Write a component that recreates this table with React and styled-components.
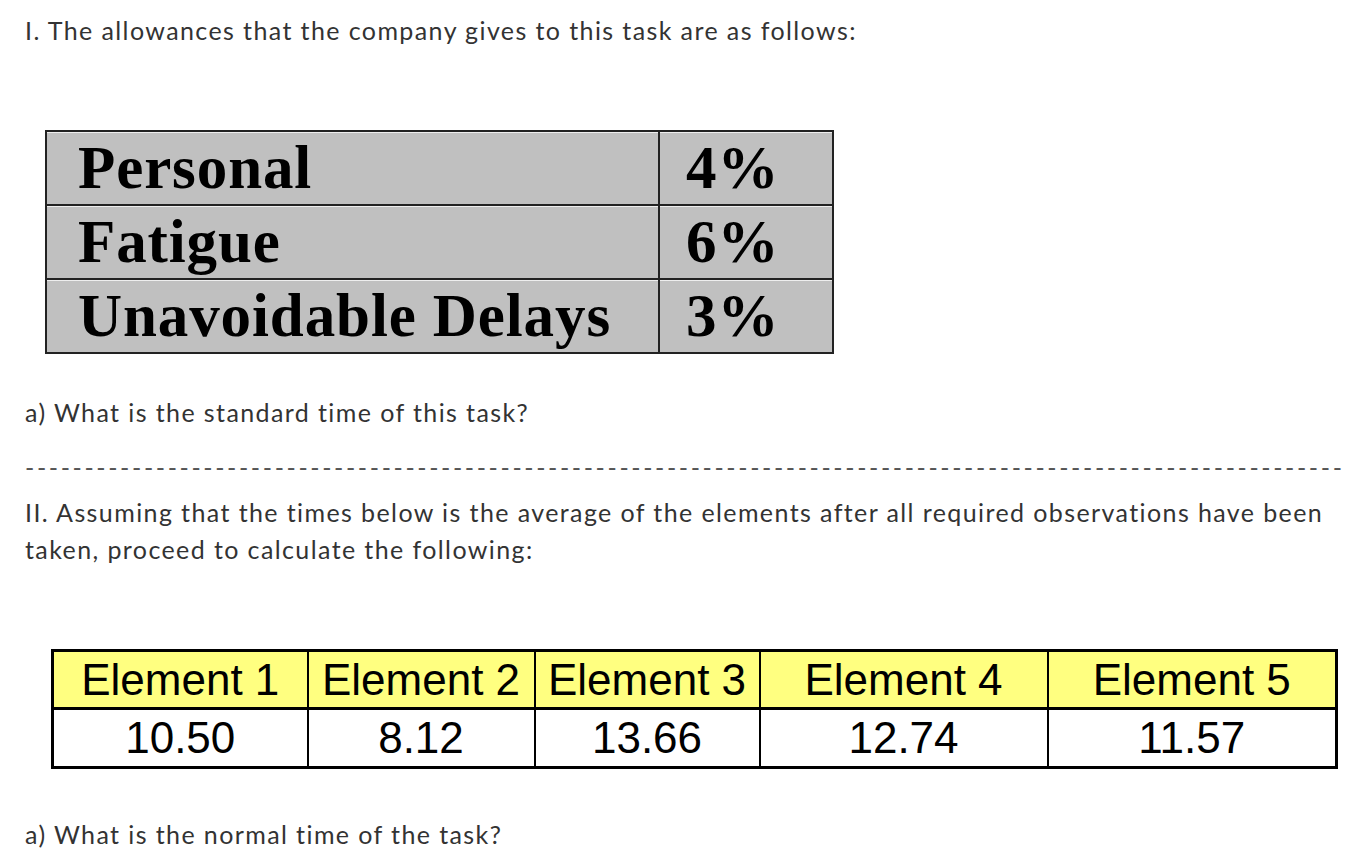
import React from "react";
import styled, { createGlobalStyle } from "styled-components";

const Global = createGlobalStyle`
  html, body { margin: 0; padding: 0; background: #fff; }
  body { font-family: Lato, "Open Sans", sans-serif; color: #333; }
`;

const Page = styled.div`
  padding: 12px 15px 0 25px;
  width: 1362px;
  box-sizing: border-box;
`;

const Para = styled.p`
  margin: ${(p) => p.$mt || 0}px 0 0 0;
  font-size: 25px;
  line-height: 37px;
  letter-spacing: 1.4px;
`;

const Dashes = styled.div`
  margin-top: 18px;
  font-size: 25px;
  line-height: 37px;
  white-space: nowrap;
  letter-spacing: 2.6px;
  color: #555;
`;

const AllowTable = styled.table`
  margin: ${(p) => p.$mt}px 0 0 20px;
  border-collapse: collapse;
  background: #c0c0c0;
  border: 2px solid #222;
  font-family: "Liberation Serif", "Times New Roman", serif;
  font-weight: bold;
  color: #000;
`;

const ACell = styled.td`
  width: ${(p) => p.$w}px;
  height: 74px;
  padding: 0 0 0 ${(p) => p.$pl}px;
  box-sizing: border-box;
  font-size: 61px;
  line-height: 62px;
  border-left: ${(p) => (p.$first ? "none" : "2px solid #222")};
  border-bottom: 2px solid #222;
  box-shadow: inset 0 1px 0 #eee;
  vertical-align: middle;
  letter-spacing: 0.9px;
`;

const ElemTable = styled.table`
  margin: ${(p) => p.$mt}px 0 0 26px;
  border-collapse: collapse;
  border: 3px solid #000;
  font-family: "Liberation Sans", Arial, sans-serif;
  color: #000;
`;

const ECell = styled.td`
  width: ${(p) => p.$w}px;
  height: ${(p) => p.$h}px;
  padding: 0;
  box-sizing: border-box;
  background: ${(p) => (p.$head ? "#ffff80" : "#fff")};
  border: 2px solid #000;
  border-bottom-width: ${(p) => (p.$head ? 3 : 2)}px;
  text-align: center;
  font-size: 44px;
  line-height: 48px;
  vertical-align: middle;
`;

const allowances = [
  ["Personal", "4%"],
  ["Fatigue", "6%"],
  ["Unavoidable Delays", "3%"],
];

const cols = [255, 227, 225, 288, 289];
const values = ["10.50", "8.12", "13.66", "12.74", "11.57"];

export default function App() {
  return (
    <Page>
      <Global />
      <Para>I. The allowances that the company gives to this task are as follows:</Para>
      <AllowTable $mt={81}>
        <tbody>
          {allowances.map(([k, v]) => (
            <tr key={k}>
              <ACell $first $w={613} $pl={31}>{k}</ACell>
              <ACell $w={174} $pl={26}>{v}</ACell>
            </tr>
          ))}
        </tbody>
      </AllowTable>
      <Para $mt={40}>a) What is the standard time of this task?</Para>
      <Dashes>{"-".repeat(111)}</Dashes>
      <Para $mt={8}>
        II. Assuming that the times below is the average of the elements after all required observations have been taken, proceed to calculate the following:
      </Para>
      <ElemTable $mt={81}>
        <tbody>
          <tr>
            {cols.map((w, i) => (
              <ECell key={i} $head $w={w} $h={58}>Element {i + 1}</ECell>
            ))}
          </tr>
          <tr>
            {cols.map((w, i) => (
              <ECell key={i} $w={w} $h={59}>{values[i]}</ECell>
            ))}
          </tr>
        </tbody>
      </ElemTable>
      <Para $mt={47}>a) What is the normal time of the task?</Para>
    </Page>
  );
}
